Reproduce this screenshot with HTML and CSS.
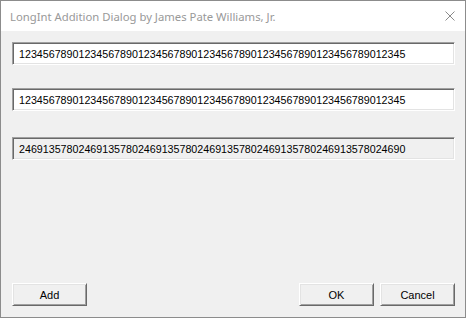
FILE: index.html
```html
<!DOCTYPE html>
<html lang="en">
<head>
    <meta charset="UTF-8">
    <title>LongInt Addition Dialog</title>
    <link rel="stylesheet" href="styles.css">
</head>
<body>
    <div class="window">
        <div class="titlebar">
            <span class="title">LongInt Addition Dialog by James Pate Williams, Jr.</span>
            <svg class="close" width="10" height="10" viewBox="0 0 10 10">
                <path d="M0.5 0.5 L9.5 9.5 M9.5 0.5 L0.5 9.5" stroke="#8a8a8a" stroke-width="1" fill="none"/>
            </svg>
        </div>
        <div class="client">
            <input class="field first" type="text" value="12345678901234567890123456789012345678901234567890123456789012345">
            <input class="field second" type="text" value="12345678901234567890123456789012345678901234567890123456789012345">
            <input class="field result" type="text" readonly value="24691357802469135780246913578024691357802469135780246913578024690">
            <div class="buttons">
                <button class="btn">Add</button>
                <div class="spacer"></div>
                <button class="btn">OK</button>
                <button class="btn">Cancel</button>
            </div>
        </div>
    </div>
</body>
</html>
```

FILE: styles.css
```css
html, body {
    margin: 0;
    padding: 0;
    background-color: #f0f0f0;
}
.window {
    width: 466px;
    height: 318px;
    box-sizing: border-box;
    border: 1px solid #8c8c8c;
    display: flex;
    flex-direction: column;
    background-color: #f0f0f0;
}
.titlebar {
    height: 30px;
    background-color: white;
    display: flex;
    align-items: center;
    padding: 0 0 0 9px;
}
.title {
    flex: 1;
    font-family: "Noto Sans", "Open Sans", sans-serif;
    font-size: 11.3px;
    color: #999999;
}
.close {
    margin-right: 10px;
}
.client {
    flex: 1;
    display: flex;
    flex-direction: column;
    padding: 11px 10px 11px 11px;
}
.field {
    display: block;
    width: 443px;
    height: 23px;
    box-sizing: border-box;
    margin: 0;
    padding: 0 0 0 6px;
    border: 1px solid;
    border-color: #a0a0a0 #ffffff #ffffff #a0a0a0;
    box-shadow: inset 1px 1px 0 #696969, inset -1px -1px 0 #e3e3e3;
    background-color: white;
    font-family: "Liberation Sans", Arial, sans-serif;
    font-size: 10.7px;
    color: black;
    outline: none;
}
.second {
    margin-top: 23px;
}
.result {
    margin-top: 26px;
    background-color: #f0f0f0;
}
.buttons {
    margin-top: auto;
    display: flex;
    gap: 6px;
}
.spacer {
    flex: 1;
}
.btn {
    width: 75px;
    height: 23px;
    box-sizing: border-box;
    margin: 0;
    padding: 0;
    border: 1px solid;
    border-color: #ffffff #696969 #696969 #ffffff;
    box-shadow: inset 1px 1px 0 #e3e3e3, inset -1px -1px 0 #a0a0a0;
    background-color: #f0f0f0;
    font-family: "Liberation Sans", Arial, sans-serif;
    font-size: 11px;
    color: black;
}
```
